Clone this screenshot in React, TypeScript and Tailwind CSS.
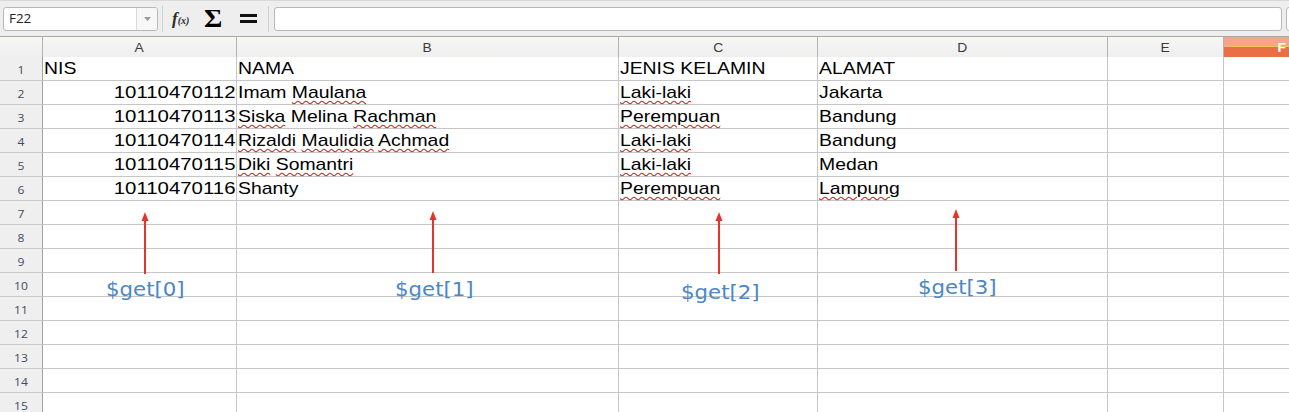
import { Fragment } from 'react'
import clsx from 'clsx'

const cols = ['', 'A', 'B', 'C', 'D', 'E', 'F']

const data = [
  ['NIS', 'NAMA', 'JENIS KELAMIN', 'ALAMAT'],
  ['10110470112', 'Imam Maulana', 'Laki-laki', 'Jakarta'],
  ['10110470113', 'Siska Melina Rachman', 'Perempuan', 'Bandung'],
  ['10110470114', 'Rizaldi Maulidia Achmad', 'Laki-laki', 'Bandung'],
  ['10110470115', 'Diki Somantri', 'Laki-laki', 'Medan'],
  ['10110470116', 'Shanty', 'Perempuan', 'Lampung'],
]

// words flagged by the spell checker
const misspelled = new Set([
  'Maulana', 'Siska', 'Rachman', 'Rizaldi', 'Maulidia', 'Achmad',
  'Diki', 'Somantri', 'Laki-laki', 'Perempuan', 'Lampung',
])

const notes = [
  { label: '$get[0]', arrow: 'left-[140px] top-[212px]', text: 'left-[106px] top-[280px]' },
  { label: '$get[1]', arrow: 'left-[428px] top-[211px]', text: 'left-[395px] top-[280px]' },
  { label: '$get[2]', arrow: 'left-[714px] top-[212px]', text: 'left-[681px] top-[283px]' },
  { label: '$get[3]', arrow: 'left-[951px] top-[209px]', text: 'left-[918px] top-[278px]' },
]

const gridCols = 'grid w-[1340px] grid-cols-[43px_194px_382px_199px_290px_116px_116px]'

function Words({ text }: { text: string }) {
  return (
    <>
      {text.split(' ').map((w, i) => (
        <Fragment key={i}>
          {i > 0 && ' '}
          {misspelled.has(w) ? (
            <span className="underline decoration-wavy decoration-[#e01b1b] decoration-1 underline-offset-2">
              {w}
            </span>
          ) : (
            w
          )}
        </Fragment>
      ))}
    </>
  )
}

function Toolbar() {
  return (
    <div className="flex h-9 w-[1340px] items-center border-t border-[#d8d8d8] bg-[#eeeeee] pl-[3px]">
      {/* Name box */}
      <div className="flex h-6 w-[155px] shrink-0 overflow-hidden rounded-[3px] border border-[#b8b8b8] bg-white">
        <div className="flex-1 pl-[5px] font-['Open_Sans',sans-serif] text-[12px] leading-[22px] text-[#222]">
          <span className="inline-block origin-left scale-x-[1.12]">F22</span>
        </div>
        <div className="flex w-[21px] items-center justify-center border-l border-[#dadada] bg-[#f7f7f7]">
          <svg width="7" height="4" viewBox="0 0 7 4">
            <path d="M0 0h7L3.5 4z" fill="#9a9a9a" />
          </svg>
        </div>
      </div>
      <div className="ml-[4px] h-[26px] w-px shrink-0 bg-[#cfcfcf]" />

      {/* f(x) */}
      <div className="ml-[9px] flex w-[22px] shrink-0 items-baseline font-['Liberation_Serif',serif] text-[#2b2b2b] italic">
        <span className="text-[17px] leading-none font-bold">f</span>
        <span className="text-[10px] leading-none font-bold">(x)</span>
      </div>

      {/* Sum */}
      <div className="ml-[11px] w-[17px] shrink-0 text-center font-['Liberation_Serif',serif] text-[25px] leading-none font-bold text-black">
        <span className="inline-block scale-x-[1.12]">Σ</span>
      </div>

      {/* Equals */}
      <div className="ml-[18px] flex w-[17px] shrink-0 items-center">
        <svg width="17" height="9" viewBox="0 0 17 9">
          <rect x="0" y="0" width="17" height="3" fill="#111" />
          <rect x="0" y="6" width="17" height="3" fill="#111" />
        </svg>
      </div>
      <div className="ml-[11px] h-[26px] w-px shrink-0 bg-[#cfcfcf]" />

      {/* Formula input */}
      <div className="ml-[5px] h-6 w-[1008px] shrink-0 rounded-[3px] border border-[#b8b8b8] bg-white" />
      <div className="ml-[4px] h-6 w-[20px] shrink-0 rounded-[3px] border border-[#b8b8b8] bg-white" />
    </div>
  )
}

function HeaderRow() {
  return (
    <div className={clsx(gridCols, 'h-[21px] border-y border-[#a8a8a8]')}>
      {cols.map((c, i) =>
        c === 'F' ? (
          <div
            key={c}
            className="flex items-center justify-center bg-[linear-gradient(to_bottom,#f6a48c_0,#f6a48c_9px,#efc25a_9px,#efc25a_10px,#ea6f45_10px)] pt-[1px] font-['Liberation_Sans',sans-serif] text-[12px] font-bold text-white"
          >
            <span className="inline-block scale-x-[1.15]">F</span>
          </div>
        ) : (
          <div
            key={c || i}
            className="flex items-center justify-center border-r border-[#b3b3b3] bg-[linear-gradient(to_bottom,#f7f7f6,#eeeeee)] pt-[2px] font-['Liberation_Sans',sans-serif] text-[12px] text-[#3a3a3a]"
          >
            <span className="inline-block scale-x-[1.15]">{c}</span>
          </div>
        )
      )}
    </div>
  )
}

function DataRow({ n }: { n: number }) {
  const row = data[n - 1]
  return (
    <div className={clsx(gridCols, 'h-6')}>
      <div className="flex items-center justify-center border-r border-b border-r-[#a3a3a3] border-b-[#c8c8c8] bg-[#efefef] pt-[4px] font-['Open_Sans',sans-serif] text-[10.5px] text-[#3e4d5e]">
        <span className="inline-block scale-x-[1.15]">{n}</span>
      </div>
      {[0, 1, 2, 3, 4, 5].map((c) => {
        const value = row?.[c]
        const right = n > 1 && c === 0
        return (
          <div
            key={c}
            className={clsx(
              "flex items-center border-b border-[#c6c6c6] font-['Liberation_Sans',sans-serif] text-[17px] leading-[23px] whitespace-nowrap text-black",
              c < 5 && 'border-r',
              right ? 'justify-end pr-px' : 'pl-px'
            )}
          >
            {value && (
              <span
                className={clsx(
                  'inline-block',
                  right ? 'origin-right scale-x-[1.2]' : 'origin-left scale-x-[1.14]'
                )}
              >
                <Words text={value} />
              </span>
            )}
          </div>
        )
      })}
    </div>
  )
}

export default function App() {
  return (
    <div className="relative h-[412px] w-[1289px] overflow-hidden bg-white">
      <Toolbar />
      <HeaderRow />
      {Array.from({ length: 15 }, (_, i) => (
        <DataRow key={i} n={i + 1} />
      ))}

      {/* Annotations */}
      {notes.map((note) => (
        <Fragment key={note.label}>
          <svg className={clsx('absolute', note.arrow)} width="10" height="62" viewBox="0 0 10 62">
            <line x1="5" y1="6" x2="5" y2="62" stroke="#e5352a" strokeWidth="2" />
            <path d="M5 0L8.5 9H1.5z" fill="#e5352a" />
          </svg>
          <div
            className={clsx(
              "absolute origin-left scale-x-[1.12] font-['DejaVu_Sans',sans-serif] text-[19px] leading-none whitespace-nowrap text-[#4a86c8]",
              note.text
            )}
          >
            {note.label}
          </div>
        </Fragment>
      ))}
    </div>
  )
}
